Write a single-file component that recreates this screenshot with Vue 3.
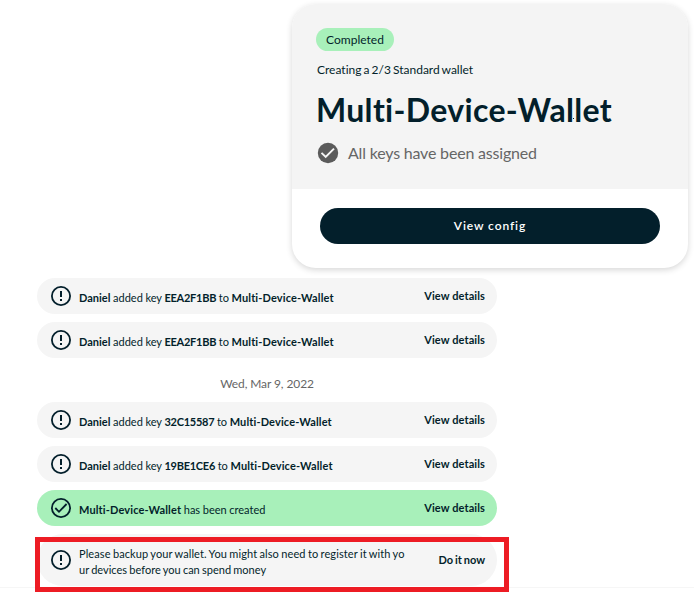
<script setup>
const groups = [
  {
    date: null,
    events: [
      { who: 'Daniel', key: 'EEA2F1BB' },
      { who: 'Daniel', key: 'EEA2F1BB' },
    ],
  },
  {
    date: 'Wed, Mar 9, 2022',
    events: [
      { who: 'Daniel', key: '32C15587' },
      { who: 'Daniel', key: '19BE1CE6' },
      { done: true },
      { backup: true },
    ],
  },
]
const wallet = 'Multi-Device-Wallet'
</script>

<template>
  <main class="page">
    <section class="card">
      <header class="summary">
        <span class="badge">Completed</span>
        <p class="kind">Creating a 2/3 Standard wallet</p>
        <h1>{{ wallet }}</h1>
        <div class="status">
          <svg width="22" height="22" viewBox="0 0 22 22">
            <circle cx="11" cy="11" r="10.2" fill="#5b5b5b" />
            <path d="M4.5 10.9 8.7 14.9 17 6.6" fill="none" stroke="#f4f4f4" stroke-width="2" />
          </svg>
          <span>All keys have been assigned</span>
        </div>
      </header>
      <div class="actions"><button class="primary">View config</button></div>
    </section>

    <section v-for="(group, g) in groups" :key="g" class="group">
      <div v-if="group.date" class="date">{{ group.date }}</div>
      <article
        v-for="(event, i) in group.events"
        :key="i"
        class="row"
        :class="{ done: event.done, tall: event.backup }"
      >
        <svg class="icon" width="20" height="20" viewBox="0 0 20 20" fill="none" stroke="#031f2b">
          <circle cx="10" cy="10" r="9.1" stroke-width="1.8" />
          <path v-if="event.done" d="M4.3 10 8 13.8 15.6 6" stroke-width="1.8" />
          <path v-else d="M10 5v6M10 13v2" stroke-width="2" />
        </svg>
        <p v-if="event.backup" class="message"><span class="first">Please backup your wallet. You might also need to register it with yo</span><br />ur devices before you can spend money</p>
        <p v-else-if="event.done" class="message"><b class="name">{{ wallet }}</b> has been created</p>
        <p v-else class="message"><b>{{ event.who }}</b> added key <b class="key">{{ event.key }}</b> to <b class="name">{{ wallet }}</b></p>
        <a class="link">{{ event.backup ? 'Do it now' : 'View details' }}</a>
      </article>
    </section>
    <div class="divider"></div>
    <div class="highlight"></div>
  </main>
</template>

<style>
body {
  background: #fff;
}
</style>

<style scoped>
.page {
  position: relative;
  box-sizing: border-box;
  width: 694px;
  height: 600px;
  padding-top: 4px;
  overflow: hidden;
  color: #031f2b;
  font-family: Lato, sans-serif;
  font-variant-ligatures: none;
}
.card {
  width: 396px;
  height: 264px;
  margin: 0 0 10px 292px;
  overflow: hidden;
  border-radius: 24px;
  background: #fff;
  box-shadow: 0 2px 6px rgba(0, 0, 0, 0.16);
}
.summary {
  box-sizing: border-box;
  height: 185px;
  padding: 24px;
  background: #f4f4f4;
}
.badge {
  display: block;
  width: 78px;
  height: 23px;
  border-radius: 12px;
  background: #a8f0ba;
  font-size: 12px;
  line-height: 24px;
  text-align: center;
}
.kind {
  margin: 10px 0 0 1px;
  font-size: 12px;
  line-height: 18px;
  word-spacing: -1px;
}
h1 {
  position: relative;
  margin: 11px 0 0;
  font-size: 32px;
  font-weight: 700;
  line-height: 40px;
  letter-spacing: 0.32px;
}
h1::after {
  content: '';
  position: absolute;
  top: 28px;
  left: 257px;
  width: 1px;
  height: 1px;
  background: #031f2b;
}
.status {
  display: flex;
  align-items: center;
  gap: 9px;
  margin: 12px 0 0 1px;
  color: #666;
  font-size: 16px;
  line-height: 22px;
  letter-spacing: -0.19px;
}
.actions {
  padding: 19px 28px;
}
.primary {
  display: block;
  width: 100%;
  height: 36px;
  padding: 0;
  border: 0;
  border-radius: 18px;
  background: #031f2b;
  color: #fff;
  font: 600 12px/36px Lato, sans-serif;
  letter-spacing: 0.9px;
  font-variant-ligatures: none;
}
.group {
  display: flex;
  flex-direction: column;
  gap: 8px;
  width: 460px;
  margin-left: 37px;
}
.date {
  height: 36px;
  color: #666;
  font-size: 12px;
  line-height: 52px;
  letter-spacing: -0.1px;
  text-align: center;
}
.row {
  display: flex;
  align-items: center;
  box-sizing: border-box;
  height: 36px;
  padding: 0 12px 0 14px;
  border-radius: 18px;
  background: #f5f5f5;
}
.row.done {
  background: #a8f0ba;
}
.row.tall {
  height: 52px;
  border-radius: 26px;
}
.icon {
  flex: none;
}
.message {
  margin: 4px 0 0 8px;
  font-size: 11px;
  line-height: 16px;
  word-spacing: -0.2px;
  white-space: nowrap;
}
.key {
  letter-spacing: -0.25px;
}
.name {
  letter-spacing: 0.13px;
}
.tall .message {
  word-spacing: -0.55px;
}
.tall .first {
  letter-spacing: 0.1px;
  word-spacing: -0.6px;
}
.link {
  margin: 0 0 1px auto;
  font-size: 11px;
  font-weight: 700;
  letter-spacing: 0.1px;
  white-space: nowrap;
}
.tall .link {
  letter-spacing: 0;
  word-spacing: -0.8px;
}
.divider {
  position: absolute;
  top: 587px;
  left: 0;
  width: 694px;
  height: 1px;
  background: #f6f6f6;
}
.highlight {
  position: absolute;
  top: 537px;
  left: 35px;
  box-sizing: border-box;
  width: 474px;
  height: 55px;
  border: 5px solid #ed1c24;
}
</style>
